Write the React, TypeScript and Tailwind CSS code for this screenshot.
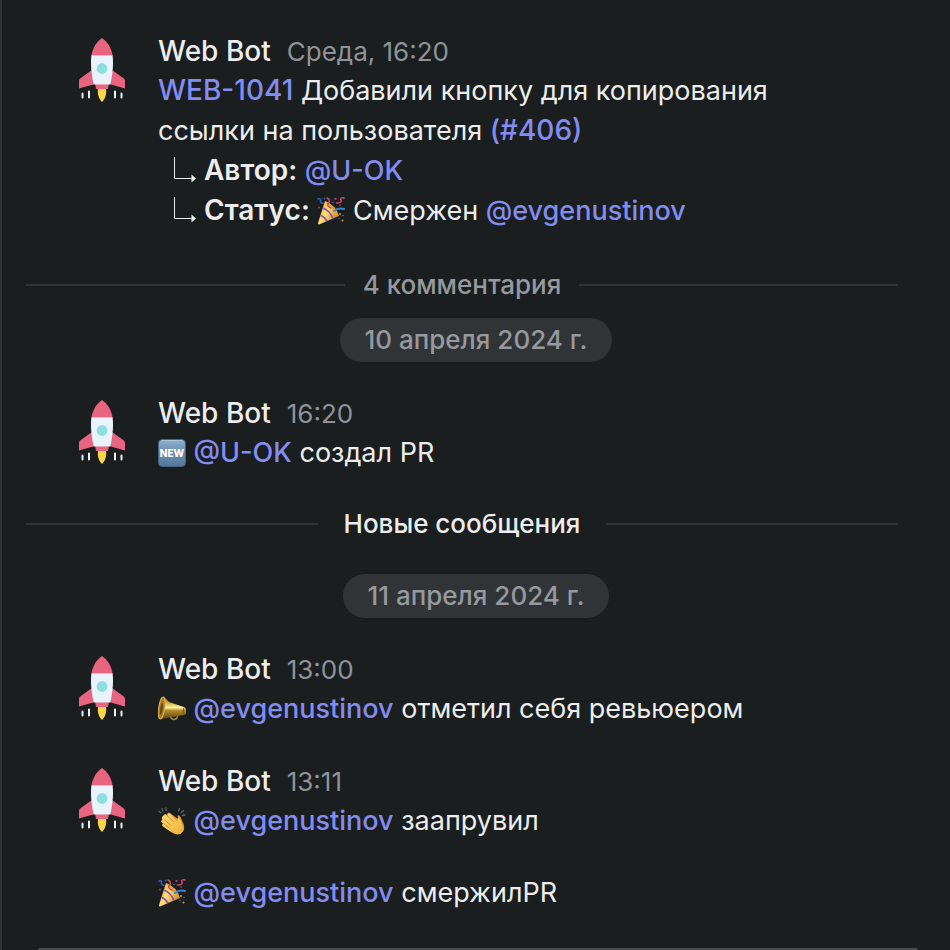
import type { ReactNode } from 'react';

function Rocket() {
  return (
    <svg viewBox="0 0 64 64" className="size-16 shrink-0" role="img" aria-label="Web Bot">
      <path d="M21.6 32.3 10.2 40.6Q9 41.6 9 43V50.4L24 46.3ZM42.4 32.3 53.8 40.6Q55 41.6 55 43V50.4L40 46.3Z" fill="#e9657f" />
      <path d="M25.2 46H38.8L38 51H26Z" fill="#e9657f" />
      <path d="M32 0C27 3.4 22.6 9.6 21.4 17.6H42.6C41.4 9.6 37 3.4 32 0Z" fill="#e9657f" />
      <path d="M21.4 17.3H42.6C43.8 27 42.2 38 40.4 46.4H23.6C21.8 38 20.2 27 21.4 17.3Z" fill="#eaf3fd" />
      <circle cx="32" cy="30.5" r="5.4" fill="#8fdfdf" />
      <path d="M28 51H36C36.8 55.6 35.3 61 32 64 28.7 61 27.2 55.6 28 51Z" fill="#fad650" />
      <path d="M12.5 55.5V59.5M19 53.5V59.5M45 53.5V59.5M51.5 55.5V59.5" stroke="#eaf3fd" strokeWidth="2" strokeLinecap="round" />
    </svg>
  );
}

function Party() {
  return (
    <svg viewBox="0 0 28 28" className="inline-block size-7 -translate-y-0.5 align-middle" role="img" aria-label="хлопушка">
      <defs>
        <linearGradient id="cone" x1="0" y1="0" x2="1" y2="0.6">
          <stop offset="0" stopColor="#d79a24" />
          <stop offset="0.5" stopColor="#ffe071" />
          <stop offset="1" stopColor="#c98a22" />
        </linearGradient>
        <clipPath id="coneClip">
          <path d="M8 4Q17 8 22 19L2 27.5Q0.5 27.5 1 26Z" />
        </clipPath>
      </defs>
      <path d="M8 4Q17 8 22 19L2 27.5Q0.5 27.5 1 26Z" fill="url(#cone)" />
      <g clipPath="url(#coneClip)" fill="none" stroke="#8a4fc4" strokeWidth="1.8">
        <path d="M5.5 11Q13 13 16.5 23M3 18Q8 20 10.5 25.500" />
      </g>
      <path d="M8 4Q13 12 22 19Q19 8 8 4Z" fill="#dca63a" />
      <g fill="none" strokeLinecap="round" strokeWidth="1.5">
        <path d="M1 2Q4 1 3.5 3.5T6 6.500" stroke="#2d65c5" />
        <path d="M10 1Q14 3 11.5 6T14 11" stroke="#dc4568" />
        <path d="M27 1Q23 0 24 3T19.5 6" stroke="#d3496f" />
        <path d="M17 14Q21 10.5 27 12" stroke="#3e82d4" strokeWidth="1.900" />
      </g>
      <g>
        <circle cx="7.5" cy="1.5" r="0.9" fill="#2d65c5" />
        <circle cx="18.5" cy="1.8" r="1.1" fill="#c4417c" />
        <circle cx="16" cy="5.5" r="0.8" fill="#3d79d0" />
        <circle cx="2" cy="10.5" r="0.9" fill="#b93b57" />
        <circle cx="23" cy="8" r="0.8" fill="#cb4a66" />
        <circle cx="23" cy="17" r="1" fill="#e09a35" />
        <circle cx="26" cy="18.5" r="0.8" fill="#8458c2" />
        <circle cx="25.5" cy="23.5" r="1" fill="#e09a35" />
        <circle cx="22" cy="21.5" r="0.8" fill="#3569be" />
      </g>
    </svg>
  );
}

function NewBadge() {
  return (
    <svg viewBox="0 0 28 28" className="inline-block size-7 -translate-y-0.5 align-middle" role="img" aria-label="новое">
      <defs>
        <linearGradient id="badge" x1="0" y1="0" x2="0" y2="1">
          <stop offset="0" stopColor="#92b4d2" />
          <stop offset="0.45" stopColor="#6c8cae" />
          <stop offset="1" stopColor="#54799f" />
        </linearGradient>
      </defs>
      <rect x="0.5" y="0.5" width="27" height="27" rx="4" fill="url(#badge)" stroke="#456380" />
      <path d="M4 1.5H24" stroke="#a9c6de" strokeLinecap="round" />
      <text x="14" y="17.5" textAnchor="middle" fill="#fff" className="font-['Inter',sans-serif] text-[10px] font-extrabold">NEW</text>
    </svg>
  );
}

function Megaphone() {
  return (
    <svg viewBox="0 0 28 28" className="inline-block size-7 -translate-y-0.5 align-middle" role="img" aria-label="мегафон">
      <defs>
        <linearGradient id="horn" x1="0" y1="0" x2="0" y2="1">
          <stop offset="0" stopColor="#8a6b1c" />
          <stop offset="0.3" stopColor="#d9b548" />
          <stop offset="0.48" stopColor="#fff0a0" />
          <stop offset="0.62" stopColor="#b08a28" />
          <stop offset="1" stopColor="#604712" />
        </linearGradient>
      </defs>
      <path d="M12 20Q13 25 16.5 24.5Q20 23.5 19.5 19" fill="none" stroke="#a58634" strokeWidth="1.5" />
      <path d="M5 2Q8 3 11 7L26 12Q28 12.500 28 16V18Q27.500 20 26 20L3 24Z" fill="url(#horn)" />
      <ellipse cx="3.7" cy="13" rx="3" ry="11.200" transform="rotate(8 3.7 13)" fill="#a87b28" stroke="#d5b453" />
      <ellipse cx="3.5" cy="14" rx="1.3" ry="6" transform="rotate(8 3.5 14)" fill="#704714" />
      <path d="M26 12.500Q24.500 16 26 20" fill="none" stroke="#72561a" />
    </svg>
  );
}

function Clap() {
  return (
    <svg viewBox="0 0 28 28" className="inline-block size-7 -translate-y-0.5 align-middle" role="img" aria-label="аплодисменты">
      <defs>
        <linearGradient id="skin" x1="0" y1="0" x2="1" y2="1">
          <stop offset="0" stopColor="#ffe078" />
          <stop offset="1" stopColor="#f2ad36" />
        </linearGradient>
      </defs>
      <path d="M9 7Q10 4.5 12 6L20 12 19.5 9Q21 7 22.5 10L25.5 17Q28 24 22 27L14 24Z" fill="#dc9833" />
      <path d="M5.5 8.5Q7 6.5 8.8 8L10 9Q9 6 11.5 6.5L19.5 14.5Q19 10.5 21 11Q22.5 12 23.5 16Q27.5 23 23 26.5Q19 29 13 25L5 19.5Q3 17.5 5.2 17L3.5 15.3Q2.5 13.5 4.5 13L4.2 12.5Q2.8 10.5 5.5 8.5Z" fill="url(#skin)" />
      <path d="M6 12.5 12.5 18M5.5 16.5 11 21M8.8 8.5 15.5 14.5" fill="none" stroke="#c98526" strokeWidth="0.9" strokeLinecap="round" />
      <path d="M1 4.5 2.8 5.8M4 1.5 5 4M8 1V3.5M20.5 4 21.5 1.5M23.5 5.5 25.5 3.5M24.5 8.5 27 8" stroke="#65686b" strokeWidth="1.3" strokeLinecap="round" />
    </svg>
  );
}

function Branch() {
  return (
    <svg viewBox="0 0 24 28" className="mr-2 ml-3.5 inline-block h-7 w-6 -translate-y-0.5 align-middle" aria-hidden="true">
      <path d="M2.5 0V21.5H21" fill="none" stroke="#ededed" />
      <path d="M19.5 17.5 24 21.5 19.500 25.500Z" fill="#ededed" />
    </svg>
  );
}

function TaskLink({ children }: { children: ReactNode }) {
  return <a href="#" className="text-[28px] leading-none font-medium text-[#838cf1]">{children}</a>;
}

function Mention({ children }: { children: ReactNode }) {
  return <a href="#" className="font-medium text-[#838cf1]">{children}</a>;
}

function Label({ children }: { children: ReactNode }) {
  return <b className="text-[28px] leading-none font-semibold">{children}</b>;
}

function Message({ time, children }: { time: string; children: ReactNode }) {
  return (
    <article className="flex gap-6 pr-20 pl-[68px]">
      <div className="pt-[7px]"><Rocket /></div>
      <div className="min-w-0 flex-1">
        <header className="flex h-10 items-baseline gap-4">
          <span className="font-medium">Web Bot</span>
          <time className="text-[26px] text-[#8f9399]">{time}</time>
        </header>
        <div className="text-[27px] leading-10">{children}</div>
      </div>
    </article>
  );
}

function Divider({ children, className }: { children: ReactNode; className: string }) {
  return (
    <div className={`mr-[52px] ml-6 flex items-center text-[26px] font-medium ${className}`}>
      <span className="h-0.5 flex-1 bg-[#303437]" />
      <span>{children}</span>
      <span className="h-0.5 flex-1 bg-[#303437]" />
    </div>
  );
}

function DatePill({ children }: { children: ReactNode }) {
  return (
    <div className="flex justify-center">
      <time className="rounded-full bg-[#303437] px-6 text-[26px] leading-[44px] font-medium text-[#96999e]">{children}</time>
    </div>
  );
}

export default function App() {
  return (
    <main className="flex min-h-screen flex-col border-l-2 border-[#303436] bg-[#1a1e1f] pt-[31px] font-['Inter','Noto_Sans',sans-serif] text-[28px] leading-10 text-[#ededed]">
      <Message time="Среда, 16:20">
        <p>
          <TaskLink>WEB-1041</TaskLink> Добавили кнопку для копирования ссылки на пользователя <TaskLink>(#406)</TaskLink>
        </p>
        <p><Branch /><Label>Автор:</Label> <Mention>@U-OK</Mention></p>
        <p><Branch /><Label>Статус:</Label> <Party /> Смержен <Mention>@evgenustinov</Mention></p>
      </Message>

      <div className="pt-[34px] pb-[13px]">
        <Divider className="gap-[18px] text-[#96999e]">4 комментария</Divider>
      </div>
      <DatePill>10 апреля 2024 г.</DatePill>

      <div className="pt-[31px]">
        <Message time="16:20">
          <p><NewBadge /> <Mention>@U-OK</Mention> создал PR</p>
        </Message>
      </div>

      <div className="pt-[31px] pb-[30px]">
        <Divider className="gap-[26px]">Новые сообщения</Divider>
      </div>
      <DatePill>11 апреля 2024 г.</DatePill>

      <div className="flex flex-col gap-8 pt-[31px]">
        <Message time="13:00">
          <p><Megaphone /> <Mention>@evgenustinov</Mention> отметил себя ревьюером</p>
        </Message>
        <Message time="13:11">
          <p><Clap /> <Mention>@evgenustinov</Mention> заапрувил</p>
          <p className="mt-8"><Party /> <Mention>@evgenustinov</Mention> смержилPR</p>
        </Message>
      </div>

      <footer className="mt-auto mr-8 ml-9 h-0.5 rounded-t-full bg-[#494b50]" />
    </main>
  );
}
